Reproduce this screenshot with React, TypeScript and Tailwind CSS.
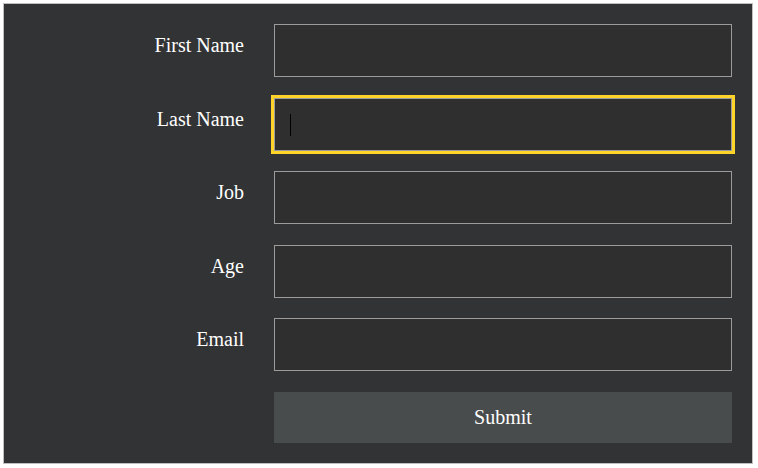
import React from "react";

const fields = ["First Name", "Last Name", "Job", "Age", "Email"];

export default function App() {
  return (
    <div className="bg-white p-[3px] w-[758px] h-[468px]" style={{ fontFamily: '"Liberation Serif", "Times New Roman", serif' }}>
      <div className="border border-[#c0c0c0] bg-[#323335] w-[750px] h-[461px] pt-[20px] pr-[20px] pl-[20px]">
        <div className="grid grid-cols-[220px_1fr] gap-x-[30px] gap-y-[20.5px]">
          {fields.map((f, i) => (
            <React.Fragment key={f}>
              <label className="text-right text-[20px] leading-[23px] text-white pt-[10px]">{f}</label>
              <div className="relative h-[53px]">
                <input
                  type="text"
                  className={
                    "w-full h-full bg-[#2e2f2e] border border-[#9b9b9b] px-[15px] text-white text-[20px] " +
                    (i === 1 ? "outline-[3px] outline-solid outline-[#ffd42a]" : "outline-none")
                  }
                />
                {i === 1 && <span className="absolute left-[16px] top-[16px] w-px h-[22px] bg-black" />}
              </div>
            </React.Fragment>
          ))}
          <div />
          <button className="h-[51px] bg-[#494c4c] text-white text-[20px]">Submit</button>
        </div>
      </div>
    </div>
  );
}
